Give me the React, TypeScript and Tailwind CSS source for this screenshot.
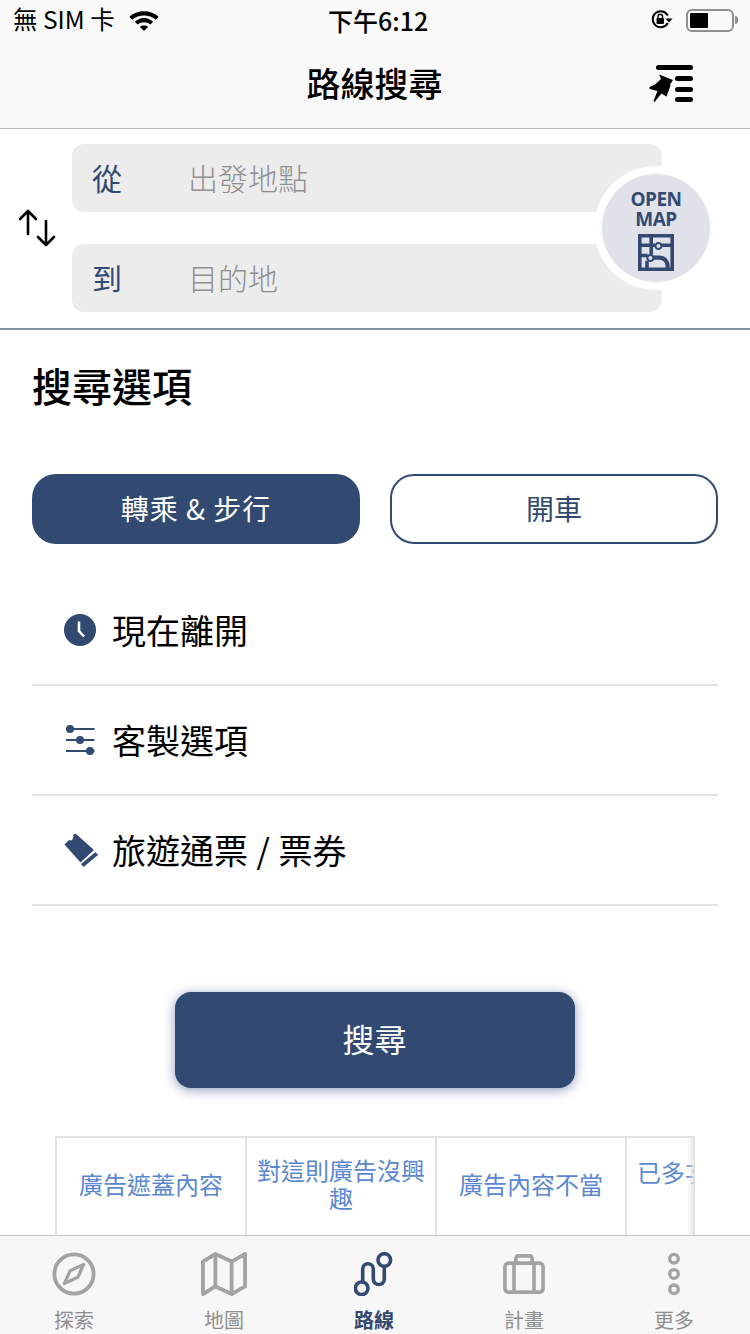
import React from 'react';

const NAVY = '#324a72';

function StatusBar() {
  return (
    <div className="h-10 flex items-center justify-between pl-[13px] pr-[12px] text-black relative">
      <div className="flex items-center gap-[13px]">
        <span className="text-[24.500px] leading-none pb-[2px]">無 SIM 卡</span>
        <svg width="32" height="22" viewBox="0 0 32 24" fill="#000">
          <path d="M0 8.500C8.500.500 23.500.500 32 8.500l-3 3.200C21.800 5.500 10.200 5.500 3 11.700z" />
          <path d="M6 14C12 8.500 20 8.500 26 14l-3 3c-3.900-3.300-10.100-3.300-14 0z" />
          <path d="M11.500 19.500c2.600-2 6.400-2 9 0L16 24z" />
        </svg>
      </div>
      <span className="absolute left-[328px] top-[5px] text-[25px] leading-[30px] font-medium">下午6:12</span>
      <div className="flex items-center gap-[11px]">
        <svg width="24" height="24" viewBox="0 0 24 24" fill="none" stroke="#000" strokeWidth="2">
          <path d="M16.800 15A8 8 0 1 1 16.800 7.500" />
          <path d="M14.500 10.500h7L18 14.500z" fill="#000" stroke="none" />
          <rect x="5.500" y="10" width="7.500" height="6" rx="1" fill="#000" stroke="none" />
          <path d="M7 10V8.500a2.200 2.200 0 0 1 4.500 0V10" strokeWidth="1.400" />
        </svg>
        <div className="flex items-center">
          <div className="w-[48px] h-[23px] border-2 border-[#8f8f8f] rounded-[6px] p-[2px]">
            <div className="w-[18px] h-full bg-black rounded-[1px]" />
          </div>
          <div className="w-[3px] h-[8px] bg-[#8f8f8f] ml-[1px] rounded-r-full" />
        </div>
      </div>
    </div>
  );
}

function PinListIcon() {
  return (
    <svg width="46" height="40" viewBox="0 0 46 40" fill="#000">
      <rect x="7" y="0" width="37" height="5" rx="2.500" />
      <rect x="26" y="11" width="18" height="5" rx="2.500" />
      <rect x="26" y="22" width="18" height="5" rx="2.500" />
      <rect x="26" y="32" width="18" height="5" rx="2.500" />
      <path d="M10 9.500L24 15 21 19.500 21.500 20.500 17.500 31.500 12.500 28.500 5.500 37 4.500 36 8.500 26 .500 24 .500 22 6 19.500 12 14z" />
    </svg>
  );
}

function SwapIcon() {
  return (
    <svg width="38" height="38" viewBox="0 0 38 38" fill="none" stroke="#000" strokeWidth="2.600" strokeLinecap="round" strokeLinejoin="round">
      <path d="M10 2v23M2 10l8-8 8 8" />
      <path d="M28 12v24M20 28l8 8 8-8" />
    </svg>
  );
}

function MapIcon() {
  return (
    <svg width="36" height="37" viewBox="0 0 34 36" fill="none" preserveAspectRatio="none" stroke={NAVY} strokeWidth="3.400">
      <rect x="1.700" y="1.700" width="30.600" height="32.600" />
      <path d="M1.500 11H16M22 11H32.500M12.500 1.500V20M1.500 21H9M8.500 26V34.500" />
      <circle cx="19.300" cy="11.700" r="2.900" strokeWidth="2" />
      <circle cx="11.700" cy="23.300" r="2.900" strokeWidth="2" />
      <path d="M15 23h5c5 0 8 4 8 8v4" strokeWidth="4" />
    </svg>
  );
}

function RouteField({ label, placeholder }: { label: string; placeholder: string }) {
  return (
    <div className="h-[68px] rounded-[12px] bg-[#ececed] flex items-center pl-[20px]">
      <span className="w-[98px] text-[30px] leading-none text-[#324a72] pb-[3px]">{label}</span>
      <span className="text-[30px] leading-none font-light text-[#8f8f8f] pb-[3px] ml-[-2px]">{placeholder}</span>
    </div>
  );
}

function ClockIcon() {
  return (
    <svg width="32" height="32" viewBox="0 0 32 32">
      <circle cx="16" cy="16" r="16" fill={NAVY} />
      <path d="M15 7.500v9.500l5 5.500" fill="none" stroke="#fff" strokeWidth="2.600" />
    </svg>
  );
}

function SlidersIcon() {
  return (
    <svg width="32" height="32" viewBox="0 0 32 32" fill={NAVY}>
      <rect x="2" y="4" width="28.500" height="2" />
      <rect x="2" y="15" width="28.500" height="2" />
      <rect x="2" y="26" width="28.500" height="2" />
      <circle cx="6" cy="5" r="4" />
      <circle cx="16" cy="16" r="4" />
      <circle cx="26" cy="27" r="4" />
    </svg>
  );
}

function TicketIcon() {
  return (
    <svg width="34" height="34" viewBox="0 0 34 34" fill={NAVY} className="mr-[-2px]">
      <path d="M11.500.500L30 17 16.500 29.500.500 11.500 5 7c2 1 3.500 0 4-1.500S9.500 3 9 2z" />
      <path d="M31.500 19L34 22 19.500 34 17 31z" />
    </svg>
  );
}

function OptionRow({ icon, text }: { icon: React.ReactNode; text: string }) {
  return (
    <div className="h-[110px] border-b-2 border-[#e2e2e2] flex items-center pl-[32px] gap-[16px]">
      {icon}
      <span className="text-[34px] text-black leading-none pb-[1px] [word-spacing:1px]">{text}</span>
    </div>
  );
}

function AdCell({ text, width, top }: { text: string; width: string; top?: boolean }) {
  return (
    <div className={`${width} shrink-0 h-full border-r-2 border-[#e2e2e2] flex justify-center text-center text-[24px] leading-[28px] text-[#5b87d1] px-[8px] ${top ? 'items-start pt-[20px]' : 'items-center pb-[5px]'}`}>
      {text}
    </div>
  );
}

function Tab({ icon, label, active }: { icon: React.ReactNode; label: string; active?: boolean }) {
  return (
    <div className="w-[150px] flex flex-col items-center">
      <div className="h-[44px] mt-[16px] flex items-center justify-center">{icon}</div>
      <span className={`mt-[11px] text-[20px] leading-[26px] ${active ? 'text-[#324a72] font-bold' : 'text-[#8e8e8e]'}`}>{label}</span>
    </div>
  );
}

export default function App() {
  return (
    <div
      className="w-[750px] h-[1334px] bg-white flex flex-col overflow-hidden relative"
      style={{ fontFamily: '"Noto Sans CJK TC", "Noto Sans", sans-serif' }}
    >
      <div className="h-[129px] bg-[#f9f9f9] border-b border-[#b4b4b4]">
        <StatusBar />
        <div className="h-[88px] relative flex items-center justify-center">
          <span className="text-[34px] leading-none font-medium text-black pb-[2px] ml-[-1px]">路線搜尋</span>
          <div className="absolute left-[649px] top-[25px]">
            <PinListIcon />
          </div>
        </div>
      </div>

      <div className="h-[201px] border-b-2 border-[#87929f] flex items-start pt-[15px] relative">
        <div className="w-[72px] self-center flex justify-end pr-[16px] pb-[16px]">
          <SwapIcon />
        </div>
        <div className="w-[590px] flex flex-col gap-[32px]">
          <RouteField label="從" placeholder="出發地點" />
          <RouteField label="到" placeholder="目的地" />
        </div>
        <div className="absolute left-[594px] top-[37px] w-[124px] h-[124px] rounded-full bg-white flex items-center justify-center">
          <div className="w-[108px] h-[108px] rounded-full bg-[#dfe2e8] flex flex-col items-center pt-[15px]">
            <span className="text-[19px] leading-[20px] font-bold tracking-[-0.5px] text-center text-[#324a72]" style={{ fontFamily: '"Open Sans", sans-serif' }}>
              OPEN
              <br />
              MAP
            </span>
            <div className="mt-[5px] h-[37px]"><MapIcon /></div>
          </div>
        </div>
      </div>

      <div className="px-[32px]">
        <h1 className="text-[40px] leading-[56px] font-medium text-black mt-[27px]">搜尋選項</h1>
        <div className="flex gap-[30px] mt-[61px]">
          <div className="w-[328px] h-[70px] rounded-[24px] bg-[#324a72] flex items-center justify-center text-white text-[28px] leading-none pb-[3px] tracking-[1px]">轉乘 &amp; 步行</div>
          <div className="w-[328px] h-[70px] rounded-[24px] border-2 border-[#324a72] bg-white flex items-center justify-center text-[#324a72] text-[28px] leading-none pb-[3px]">開車</div>
        </div>
        <div className="mt-[32px]">
          <OptionRow icon={<ClockIcon />} text="現在離開" />
          <OptionRow icon={<SlidersIcon />} text="客製選項" />
          <OptionRow icon={<TicketIcon />} text="旅遊通票 / 票券" />
        </div>
      </div>

      <div className="flex justify-center mt-[86px]">
        <button className="w-[400px] h-[96px] rounded-[16px] bg-[#324a72] text-white text-[32px] leading-none pb-[4px] ml-[-1px] shadow-[0_2px_12px_rgba(50,74,140,0.55)]">搜尋</button>
      </div>

      <div className="ml-[55px] mt-[48px] w-[640px] flex-1 min-h-0 border-t-2 border-l-2 border-[#e2e2e2] flex overflow-hidden relative">
        <AdCell width="w-[190px]" text="廣告遮蓋內容" />
        <AdCell width="w-[190px]" text="對這則廣告沒興趣" />
        <AdCell width="w-[190px]" text="廣告內容不當" />
        <AdCell width="w-[190px]" text="已多次看到這則廣告" top />
        <div className="absolute right-0 top-0 bottom-0 w-[8px] bg-gradient-to-r from-transparent to-[#e0e0e0]" />
      </div>

      <div className="h-[99px] shrink-0 bg-[#f7f7f7] border-t border-[#c4c4c4] flex ml-[-1px]">
        <Tab
          label="探索"
          icon={
            <svg width="44" height="44" viewBox="0 0 46 46" fill="none" stroke="#a3a3a3" strokeWidth="4">
              <circle cx="23" cy="23" r="20.500" />
              <path d="M33 13l-14 6.500L13 33l14-6.500z" strokeWidth="3.500" strokeLinejoin="round" />
            </svg>
          }
        />
        <Tab
          label="地圖"
          icon={
            <svg width="48" height="44" viewBox="0 0 48 46" fill="none" stroke="#a3a3a3" strokeWidth="4" strokeLinejoin="round">
              <path d="M2 10L15 2l17 8 14-8v34l-14 8-17-8-13 8z" />
              <path d="M15 2v34M32 10v34" />
            </svg>
          }
        />
        <Tab
          active
          label="路線"
          icon={
            <svg width="40" height="44" viewBox="0 0 40 44" fill="none" stroke={NAVY} strokeWidth="3.600">
              <circle cx="30.300" cy="8" r="6.300" />
              <circle cx="7.700" cy="36.300" r="6.300" />
              <path d="M8.700 30V17a5.300 5.300 0 0 1 10.600 0v10a5.500 5.500 0 0 0 11 0V14.500" />
            </svg>
          }
        />
        <Tab
          label="計畫"
          icon={
            <svg width="44" height="40" viewBox="0 0 46 44" fill="none" stroke="#a3a3a3" strokeWidth="4">
              <rect x="2" y="10" width="42" height="32" rx="4" />
              <path d="M14 10V5a3 3 0 0 1 3-3h12a3 3 0 0 1 3 3v5M12 10v32M34 10v32" />
            </svg>
          }
        />
        <Tab
          label="更多"
          icon={
            <svg width="14" height="44" viewBox="1 0 14 46" fill="none" stroke="#a3a3a3" strokeWidth="3.500">
              <circle cx="8" cy="7" r="4.500" />
              <circle cx="8" cy="23" r="4.500" />
              <circle cx="8" cy="39" r="4.500" />
            </svg>
          }
        />
      </div>
    </div>
  );
}
